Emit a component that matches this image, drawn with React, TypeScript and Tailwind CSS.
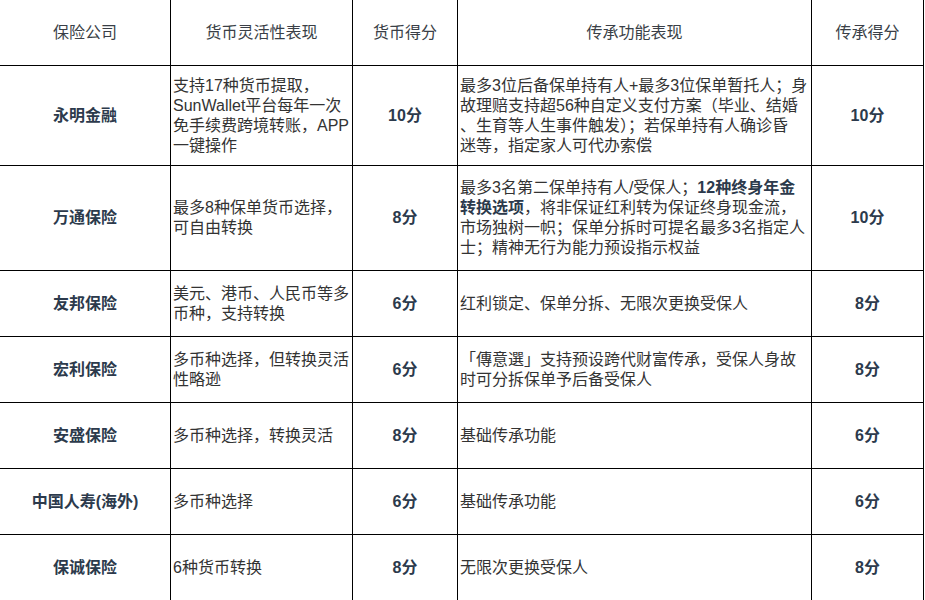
import React from "react";

type Line = React.ReactNode;

const rows: {
  name: string;
  cur: Line[];
  curScore: string;
  inh: Line[];
  inhScore: string;
}[] = [
  {
    name: "永明金融",
    cur: ["支持17种货币提取，", "SunWallet平台每年一次", "免手续费跨境转账，APP", "一键操作"],
    curScore: "10分",
    inh: [
      "最多3位后备保单持有人+最多3位保单暂托人；身",
      "故理赔支持超56种自定义支付方案（毕业、结婚",
      "、生育等人生事件触发）；若保单持有人确诊昏",
      "迷等，指定家人可代办索偿",
    ],
    inhScore: "10分",
  },
  {
    name: "万通保险",
    cur: ["最多8种保单货币选择，", "可自由转换"],
    curScore: "8分",
    inh: [
      <>
        最多3名第二保单持有人/受保人；<b className="font-bold text-[#2c3a4c]">12种终身年金</b>
      </>,
      <>
        <b className="font-bold text-[#2c3a4c]">转换选项</b>，将非保证红利转为保证终身现金流，
      </>,
      "市场独树一帜；保单分拆时可提名最多3名指定人",
      "士；精神无行为能力预设指示权益",
    ],
    inhScore: "10分",
  },
  {
    name: "友邦保险",
    cur: ["美元、港币、人民币等多", "币种，支持转换"],
    curScore: "6分",
    inh: ["红利锁定、保单分拆、无限次更换受保人"],
    inhScore: "8分",
  },
  {
    name: "宏利保险",
    cur: ["多币种选择，但转换灵活", "性略逊"],
    curScore: "6分",
    inh: ["「傳意選」支持预设跨代财富传承，受保人身故", "时可分拆保单予后备受保人"],
    inhScore: "8分",
  },
  {
    name: "安盛保险",
    cur: ["多币种选择，转换灵活"],
    curScore: "8分",
    inh: ["基础传承功能"],
    inhScore: "6分",
  },
  {
    name: "中国人寿(海外)",
    cur: ["多币种选择"],
    curScore: "6分",
    inh: ["基础传承功能"],
    inhScore: "6分",
  },
  {
    name: "保诚保险",
    cur: ["6种货币转换"],
    curScore: "8分",
    inh: ["无限次更换受保人"],
    inhScore: "8分",
  },
];

const cell = "border-r border-b border-black flex items-center overflow-hidden";

function Lines({ lines }: { lines: Line[] }) {
  return (
    <div className="flex flex-col pl-[2px]">
      {lines.map((l, i) => (
        <div key={i} className="whitespace-nowrap leading-[20px]">
          {l}
        </div>
      ))}
    </div>
  );
}

export default function App() {
  const heights = ["h-[100px]", "h-[105px]", "h-[66px]", "h-[66px]", "h-[66px]", "h-[66px]", "h-[66px]"];
  return (
    <div
      className="w-[925px] h-[600px] overflow-hidden bg-white text-[16px] text-[#333]"
      style={{ fontFamily: '"Liberation Sans", "Noto Sans CJK SC", sans-serif' }}
    >
      <div className="grid grid-cols-[171px_182px_105px_354px_112px]">
        {["保险公司", "货币灵活性表现", "货币得分", "传承功能表现", "传承得分"].map((h) => (
          <div key={h} className={`${cell} h-[66px] justify-center text-[#3a3f47]`}>
            {h}
          </div>
        ))}
        {rows.map((r, i) => (
          <React.Fragment key={r.name}>
            <div className={`${cell} ${heights[i]} justify-center font-bold text-[#2c3a4c]`}>{r.name}</div>
            <div className={`${cell} ${heights[i]}`}>
              <Lines lines={r.cur} />
            </div>
            <div className={`${cell} ${heights[i]} justify-center font-bold text-[#2c3a4c]`}>{r.curScore}</div>
            <div className={`${cell} ${heights[i]}`}>
              <Lines lines={r.inh} />
            </div>
            <div className={`${cell} ${heights[i]} justify-center font-bold text-[#2c3a4c]`}>{r.inhScore}</div>
          </React.Fragment>
        ))}
      </div>
    </div>
  );
}
